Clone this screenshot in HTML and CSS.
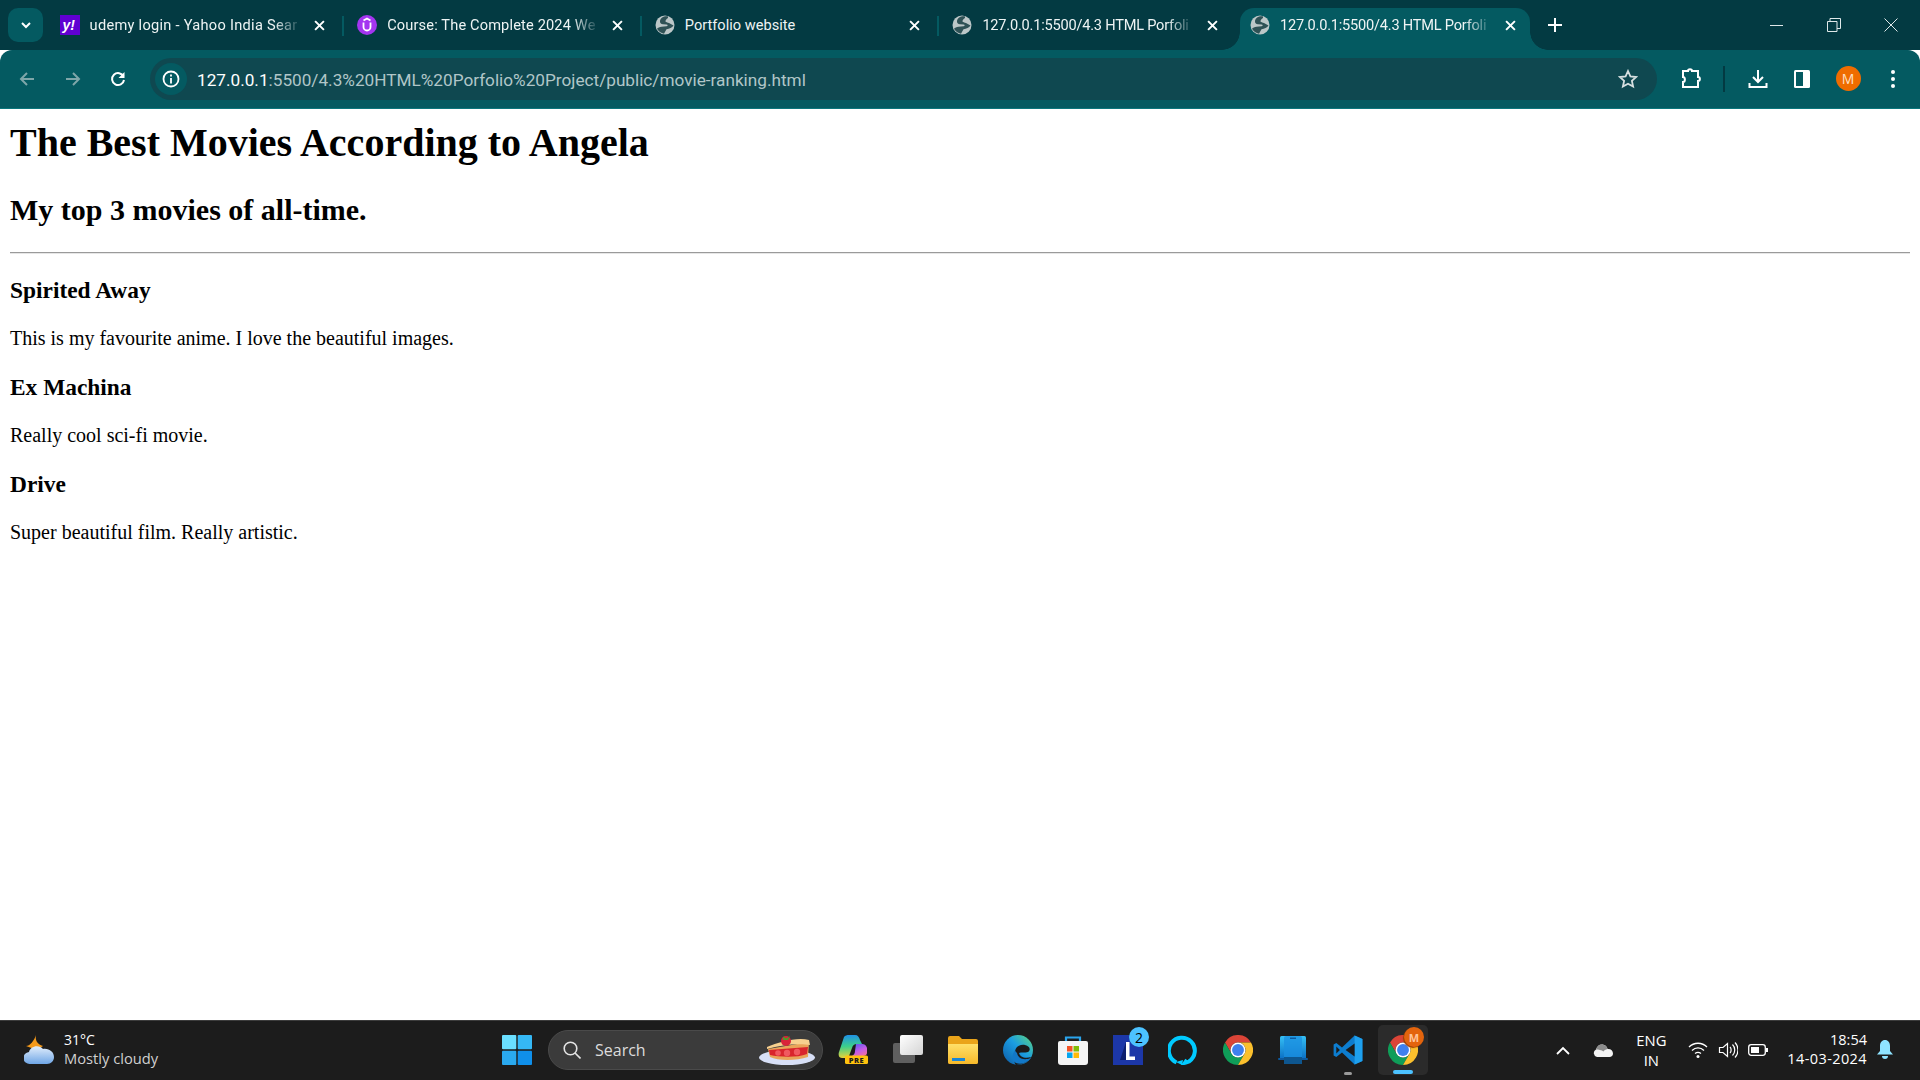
FILE: index.html
```html
<!DOCTYPE html>
<html lang="en">
<head>
<meta charset="utf-8">
<title>Movie ranking</title>
<link rel="stylesheet" href="styles.css">
</head>
<body>
<svg class="defs" width="0" height="0" aria-hidden="true">
  <defs>
    <symbol id="globe" viewBox="0 0 20 20">
      <circle cx="10" cy="10" r="9.500" fill="#bcc7c8"/>
      <path d="M13 1.500C9 .8 5.500 3 5 6c-.3 2 1 3 3 3.200l3.500.3c1.500.2 1.500 1.500 0 1.800l-5 .5c-2 .3-3.500 1-4.500 2 1.500 2.500 4 4.500 7 5l2.500-4.500c3-.5 5.500-1.500 7-3.800l-4.500-2.500c-1.500-.6-3-.6-3.500-1.500-.3-1 1-2.500 2.500-3.500z" fill="#2f5256"/>
    </symbol>
    <symbol id="chrome" viewBox="0 0 48 48">
      <path d="M24 12H44.800A24 24 0 0 0 3.200 12L13.600 30A12 12 0 0 1 24 12Z" fill="#db4437"/>
      <path d="M13.600 30L3.200 12A24 24 0 0 0 24 48L34.400 30A12 12 0 0 1 13.600 30Z" fill="#0f9d58"/>
      <path d="M24 48A24 24 0 0 0 44.800 12H24A12 12 0 0 1 34.400 30Z" fill="#fbc02d"/>
      <circle cx="24" cy="24" r="12" fill="#fff"/>
      <circle cx="24" cy="24" r="9.500" fill="#3f80ee"/>
    </symbol>
    <linearGradient id="edgeG" x1="0" y1="1" x2="1" y2="0">
      <stop offset="0" stop-color="#0c59a4"/><stop offset=".55" stop-color="#1b9de2"/><stop offset="1" stop-color="#5fd97a"/>
    </linearGradient>
    <linearGradient id="copG" x1=".25" y1="0" x2=".3" y2="1">
      <stop offset="0" stop-color="#1f8fe8"/><stop offset=".5" stop-color="#3ccf8a"/><stop offset="1" stop-color="#e8d23a"/>
    </linearGradient>
    <linearGradient id="copH" x1=".2" y1="0" x2=".8" y2="1">
      <stop offset="0" stop-color="#5a5cf0"/><stop offset=".55" stop-color="#c45ce6"/><stop offset="1" stop-color="#f26fa0"/>
    </linearGradient>
    <linearGradient id="cloudG" x1="0" y1="0" x2="0" y2="1">
      <stop offset="0" stop-color="#e2eefc"/><stop offset="1" stop-color="#6fa6e6"/>
    </linearGradient>
    <linearGradient id="folderG" x1="0" y1="0" x2="0" y2="1">
      <stop offset="0" stop-color="#ffe06a"/><stop offset="1" stop-color="#f7b92a"/>
    </linearGradient>
    <linearGradient id="linkG" x1="0" y1="0" x2="0" y2="1">
      <stop offset="0" stop-color="#36c0f5"/><stop offset="1" stop-color="#0a6fc4"/>
    </linearGradient>
    <linearGradient id="frontG" x1="0" y1="0" x2="1" y2="1">
      <stop offset="0" stop-color="#ffffff"/><stop offset="1" stop-color="#d4d4d4"/>
    </linearGradient>
  </defs>
</svg>

<header class="browser">
  <div class="tabstrip">
    <button class="expand" type="button" aria-label="Search tabs">
      <svg class="i12" viewBox="0 0 12 12"><path d="M2 4l4 4 4-4" fill="none" stroke="#fff" stroke-width="2"/></svg>
    </button>
    <div class="tabs">
      <div class="tab">
        <svg class="favicon" viewBox="0 0 20 20"><rect width="20" height="20" fill="#6001d2"/><text class="yahoo" x="2.500" y="14.500">y!</text></svg>
        <span class="tab-title wide">udemy login - Yahoo India Sear</span>
        <svg class="close" viewBox="0 0 10 10"><path d="M1 1l8 8M9 1l-8 8"/></svg>
      </div>
      <div class="tab sep">
        <svg class="favicon" viewBox="0 0 20 20"><circle cx="10" cy="10" r="10" fill="#a435f0"/><path d="M6.500 7.500V12a3.500 3.500 0 0 0 7 0V7.500M6.500 5.500L10 3.500l3.500 2" fill="none" stroke="#fff" stroke-width="1.800"/></svg>
        <span class="tab-title mid">Course: The Complete 2024 We</span>
        <svg class="close" viewBox="0 0 10 10"><path d="M1 1l8 8M9 1l-8 8"/></svg>
      </div>
      <div class="tab sep">
        <svg class="favicon"><use href="#globe"/></svg>
        <span class="tab-title plain">Portfolio website</span>
        <svg class="close" viewBox="0 0 10 10"><path d="M1 1l8 8M9 1l-8 8"/></svg>
      </div>
      <div class="tab sep">
        <svg class="favicon"><use href="#globe"/></svg>
        <span class="tab-title tight">127.0.0.1:5500/4.3 HTML Porfoli</span>
        <svg class="close" viewBox="0 0 10 10"><path d="M1 1l8 8M9 1l-8 8"/></svg>
      </div>
      <div class="tab active">
        <svg class="favicon"><use href="#globe"/></svg>
        <span class="tab-title tight">127.0.0.1:5500/4.3 HTML Porfoli</span>
        <svg class="close" viewBox="0 0 10 10"><path d="M1 1l8 8M9 1l-8 8"/></svg>
      </div>
    </div>
    <svg class="newtab" viewBox="0 0 14 14"><path d="M7 0v14M0 7h14" stroke="#fff" stroke-width="2"/></svg>
    <div class="winctl">
      <svg class="i14" viewBox="0 0 14 14"><path d="M0 7.500h13" stroke="#dfe8e9"/></svg>
      <svg class="i14" viewBox="0 0 14 14"><path d="M.5 3.500h9.500v10H.5zM3 3.500V.5h10.500v10h-3.500" fill="none" stroke="#dfe8e9"/></svg>
      <svg class="i14" viewBox="0 0 14 14"><path d="M.5.5l13 13M13.500.5l-13 13" stroke="#dfe8e9"/></svg>
    </div>
  </div>
  <div class="toolbar">
    <div class="navs">
      <svg class="i16" viewBox="0 0 16 16"><path d="M15 8H2M8 2L2 8l6 6" fill="none" stroke="#7fa6a9" stroke-width="2"/></svg>
      <svg class="i16" viewBox="0 0 16 16"><path d="M1 8h13M8 2l6 6-6 6" fill="none" stroke="#7fa6a9" stroke-width="2"/></svg>
      <svg class="i16" viewBox="0 0 16 16"><path d="M13.500 5.500A6 6 0 1 0 14 9" fill="none" stroke="#fff" stroke-width="2"/><path d="M14.500 1v6h-6z" fill="#fff"/></svg>
    </div>
    <div class="omnibox">
      <span class="site-info"><svg class="i18" viewBox="0 0 18 18"><circle cx="9" cy="9" r="7.500" fill="none" stroke="#fff" stroke-width="1.800"/><path d="M9 8v5.500M9 4.500v2" stroke="#fff" stroke-width="1.800"/></svg></span>
      <span class="url"><span class="host">127.0.0.1</span>:5500/4.3%20HTML%20Porfolio%20Project/public/movie-ranking.html</span>
      <svg class="star" viewBox="0 0 20 20"><path d="M10 2l2.400 5.300 5.800.7-4.300 3.900 1.200 5.700L10 14.700l-5.100 2.900 1.200-5.700L1.800 8l5.800-.7z" fill="none" stroke="#d6dfe0" stroke-width="1.800"/></svg>
    </div>
    <div class="actions">
      <svg class="i22" viewBox="0 0 22 22"><path d="M3 3h5c0-2.500 4-2.500 4 0h6v6c2.500 0 2.500 4 0 4v6H3v-5c2.500 0 2.500-5 0-5z" fill="none" stroke="#fff" stroke-width="2"/></svg>
      <span class="act-div"></span>
      <svg class="i22" viewBox="0 0 22 22"><path d="M11 2v11M6 9l5 5 5-5" fill="none" stroke="#fff" stroke-width="2"/><path d="M2.500 15v4h17v-4" fill="none" stroke="#fff" stroke-width="2"/></svg>
      <svg class="i22 panel" viewBox="0 0 22 22"><rect x="3" y="2" width="16" height="18" rx="1.500" fill="#fff"/><rect x="5" y="4" width="7" height="14" fill="#045a61"/></svg>
      <span class="avatar">M</span>
      <svg class="i22" viewBox="0 0 22 22"><circle cx="11" cy="4" r="2" fill="#fff"/><circle cx="11" cy="11" r="2" fill="#fff"/><circle cx="11" cy="18" r="2" fill="#fff"/></svg>
    </div>
  </div>
</header>

<main class="page">
  <h1>The Best Movies According to Angela</h1>
  <h2>My top 3 movies of all-time.</h2>
  <hr>
  <h3>Spirited Away</h3>
  <p>This is my favourite anime. I love the beautiful images.</p>
  <h3>Ex Machina</h3>
  <p>Really cool sci-fi movie.</p>
  <h3>Drive</h3>
  <p>Super beautiful film. Really artistic.</p>
</main>

<footer class="taskbar">
  <div class="weather">
    <svg class="weather-icon" viewBox="0 0 32 30">
      <path d="M12 0c-1 5 1 9 7 11l-6 4-11-4c4 0 8-5 10-11z" fill="#f59a1b"/>
      <path d="M6 29a6 6 0 0 1-1-12c1-6 10-8 14-3 6-1 11 3 11 8 0 4-3 7-7 7z" fill="url(#cloudG)"/>
    </svg>
    <div class="weather-text"><span class="temp">31°C</span><span class="cond">Mostly cloudy</span></div>
  </div>
  <div class="apps">
    <svg class="app" viewBox="0 0 30 30">
      <rect width="14.300" height="14.300" rx="1" fill="#6adfff"/><rect x="15.700" width="14.300" height="14.300" rx="1" fill="#35b8f5"/>
      <rect y="15.700" width="14.300" height="14.300" rx="1" fill="#2aa9ef"/><rect x="15.700" y="15.700" width="14.300" height="14.300" rx="1" fill="#0f8fea"/>
    </svg>
    <div class="search">
      <svg class="search-icon" viewBox="0 0 18 18"><circle cx="7.500" cy="7.500" r="6.300" fill="none" stroke="#e4e4e4" stroke-width="1.600"/><path d="M12 12l5.500 5.500" stroke="#e4e4e4" stroke-width="1.600"/></svg>
      <span class="search-label">Search</span>
      <svg class="pie" viewBox="0 0 57 30">
        <ellipse cx="28" cy="22.500" rx="28" ry="7.500" fill="#d8e0f7"/>
        <path d="M9 14L50 7l-1 15c-12 4-30 4-38 0z" fill="#e9a45a"/>
        <path d="M10 15l39-3-1 7C38 23 20 22 11 20z" fill="#d9252c"/>
        <circle cx="19" cy="18" r="2.800" fill="#f0595f"/><circle cx="28" cy="18" r="3.200" fill="#f0595f"/><circle cx="38" cy="17" r="3.200" fill="#f0595f"/>
        <path d="M8 12C20 7 38 2 50 5l1 5C40 8 22 10 8 14z" fill="#f7d08f"/>
        <circle cx="27" cy="6" r="5" fill="#d9233a"/><path d="M24 1.500l3 2 4-2.500-2 4h-5z" fill="#4c9a2a"/>
      </svg>
    </div>
    <svg class="app" viewBox="0 0 30 30">
      <path d="M6 2C7 .5 9 0 11 0h6c3 0 4 2 5 5l2 4h-5c-3 0-4 1-5 4l-3 8c-1 2-3 2-5 2H4c-3 0-4-3-3-6z" fill="url(#copG)"/>
      <path d="M18 9h5c2 0 5 0 6 4v5c0 2-2 3-4 3H14c2-1 3-3 3-5z" fill="url(#copH)"/>
      <rect x="7" y="20.500" width="23" height="8.500" rx="1.500" fill="#ffc20e"/>
      <text class="pre" x="18.500" y="27.500">PRE</text>
    </svg>
    <svg class="app" viewBox="0 0 30 30">
      <rect x="0" y="8" width="22" height="20" rx="2" fill="#5f5f5f"/>
      <rect x="7" y="0" width="23" height="20" rx="2" fill="url(#frontG)"/>
    </svg>
    <svg class="app" viewBox="0 0 30 30">
      <path d="M0 3a2 2 0 0 1 2-2h9l3 3h14a2 2 0 0 1 2 2v21a2 2 0 0 1-2 2H2a2 2 0 0 1-2-2z" fill="#eaa41a"/>
      <path d="M0 9h30v18a2 2 0 0 1-2 2H2a2 2 0 0 1-2-2z" fill="url(#folderG)"/>
      <rect x="4" y="23" width="13" height="3" fill="#1b86d6"/>
    </svg>
    <svg class="app" viewBox="0 0 30 30">
      <circle cx="15" cy="15" r="15" fill="url(#edgeG)"/>
      <path d="M12 17c0-5 5-8 10-7 5 1 6 5 3 7-3 1-7 0-9 1 1 4 6 6 12 4-3 5-9 8-15 8-3-3-1-8-1-13z" fill="#1b1b1b"/>
      <path d="M14 18c1 5 6 8 14 5-4 5-10 7-15 5-4-2-5-7-1-13 0 1 1 2 2 3z" fill="#1278c8"/>
    </svg>
    <svg class="app" viewBox="0 0 30 30">
      <path d="M8 7V2.500h14V7" fill="none" stroke="#2aa4ec" stroke-width="2.200"/>
      <path d="M0 8a2 2 0 0 1 2-2h26a2 2 0 0 1 2 2v19a3 3 0 0 1-3 3H3a3 3 0 0 1-3-3z" fill="#f4f4f4"/>
      <rect x="9" y="11" width="5.500" height="5.500" fill="#f35325"/><rect x="15.500" y="11" width="5.500" height="5.500" fill="#81bc06"/>
      <rect x="9" y="17.500" width="5.500" height="5.500" fill="#05a6f0"/><rect x="15.500" y="17.500" width="5.500" height="5.500" fill="#ffba08"/>
    </svg>
    <div class="app-wrap">
      <svg class="app" viewBox="0 0 30 30">
        <rect width="30" height="30" fill="#1c37a8"/>
        <path d="M7 25L13 7v15h9v3z" fill="#0d1f6e"/>
        <path d="M13 7h3.500v14.500H22V25H13z" fill="#fff"/>
      </svg>
      <span class="badge blue">2</span>
    </div>
    <svg class="app" viewBox="0 0 30 30">
      <path d="M8.500 27.500A13 13 0 1 1 21 26.500c-1 .5-2.500 1-4 1.300L19 25" fill="none" stroke="#00caff" stroke-width="4"/>
      <path d="M8 27l7-2-1 5z" fill="#00caff"/>
    </svg>
    <svg class="app"><use href="#chrome"/></svg>
    <svg class="app" viewBox="0 0 30 30">
      <rect x="2" y="1" width="26" height="23" rx="1.500" fill="url(#linkG)"/>
      <rect x="0" y="23" width="30" height="2" rx="1" fill="#0c5aa0"/>
      <rect x="6" y="1" width="18" height="28" rx="2" fill="#1b8fe0" opacity=".75"/>
      <rect x="6" y="22" width="18" height="7" fill="#0e568f"/>
      <rect x="12" y="2.500" width="6" height="1.500" fill="#0c5aa0"/>
    </svg>
    <div class="app-wrap">
      <svg class="app" viewBox="0 0 100 100">
        <path d="M72 2L30 42 11 27 2 32v36l9 5 19-15 42 40 26-11V13z" fill="#0d7dcf"/>
        <path d="M72 2l26 11v74L72 98z" fill="#1ea0ee"/>
        <path d="M72 28L42 50l30 22zM11 38v24l12-12z" fill="#1b1b1b"/>
      </svg>
      <span class="run-dot"></span>
    </div>
    <div class="app-active">
      <div class="app-wrap">
        <svg class="app"><use href="#chrome"/></svg>
        <span class="badge orange">M</span>
      </div>
      <span class="run-bar"></span>
    </div>
  </div>
  <div class="tray">
    <svg class="chevron" viewBox="0 0 14 9"><path d="M1 8l6-6 6 6" fill="none" stroke="#fff" stroke-width="1.800"/></svg>
    <svg class="onedrive" viewBox="0 0 20 13"><path d="M4 13a4 4 0 0 1-1-7.500C4 1.500 8-.5 11 1c2 .6 3 2 3.500 4 3-.5 5.500 1.500 5.500 4.500 0 2-1.500 3.500-3.500 3.500z" fill="#f3f3f3"/><path d="M3 5.500C4 1.500 8-.5 11 1c2 .6 3 2 3.500 4-2 .5-3.500 1.500-4 2.500-2-1.500-5-2-7.500-2z" fill="#8c8c8c"/></svg>
    <div class="lang"><span>ENG</span><span>IN</span></div>
    <div class="status">
      <svg class="i20" viewBox="0 0 20 20"><path d="M1 7c5-5 13-5 18 0M4 10.500c3.500-3.500 8.500-3.500 12 0M7 13.500c2-1.500 4-1.500 6 0" fill="none" stroke="#fff" stroke-width="1.300"/><circle cx="10" cy="16.500" r="1.500" fill="#fff"/></svg>
      <svg class="i20" viewBox="0 0 20 20"><path d="M1.500 7.500h3.500l4.500-4v13l-4.500-4H1.500zM12 7c1.500 1.500 1.500 4.500 0 6M14.500 4.500c3 3 3 8 0 11M17 2.500c4 4 4 11 0 15" fill="none" stroke="#fff" stroke-width="1.200"/></svg>
      <svg class="i20" viewBox="0 0 20 20"><rect x=".7" y="4.700" width="16.600" height="10.600" rx="2.500" fill="none" stroke="#fff" stroke-width="1.300"/><rect x="3" y="7" width="8" height="6" fill="#fff"/><rect x="18" y="8" width="2" height="4" fill="#fff"/></svg>
    </div>
    <div class="clock"><span>18:54</span><span class="date">14-03-2024</span></div>
    <svg class="bell" viewBox="0 0 16 20"><path d="M8 0c3 0 5 2.500 5 6v5l3 3.500H0L3 11V6c0-3.500 2-6 5-6z" fill="#8fe3ff"/><path d="M5 16h6c0 2-1 3-3 3s-3-1-3-3z" fill="#8fe3ff"/></svg>
  </div>
</footer>
</body>
</html>
```

FILE: styles.css
```css
* { box-sizing: border-box; }
html, body { height: 100%; }
body {
  margin: 0;
  display: flex;
  flex-direction: column;
  height: 100vh;
  overflow: hidden;
  background: #fff;
  color: #000;
}
.defs { position: absolute; }
svg { display: block; flex: none; }
.i12 { width: 12px; height: 12px; }
.i14 { width: 14px; height: 14px; }
.i16 { width: 16px; height: 16px; }
.i18 { width: 18px; height: 18px; }
.i20 { width: 20px; height: 20px; }
.i22 { width: 22px; height: 22px; }

/* browser chrome */
.browser { flex: none; font-family: "Roboto", "Liberation Sans", sans-serif; }
.tabstrip {
  height: 50px;
  background: #033a42;
  display: flex;
  align-items: flex-start;
  padding: 8px 0 0 8px;
}
.expand {
  width: 35px;
  height: 34px;
  border: 0;
  padding: 0;
  border-radius: 10px;
  background: #045a61;
  display: flex;
  align-items: center;
  justify-content: center;
}
.tabs { display: flex; margin-left: 3.600px; height: 42px; }
.tab {
  width: 297.600px;
  height: 42px;
  padding: 0 19px 8px 13px;
  display: flex;
  align-items: center;
  position: relative;
}
.sep::before {
  content: "";
  position: absolute;
  left: -2px;
  top: 8px;
  width: 2px;
  height: 20px;
  background: #045a61;
}
.favicon { width: 20px; height: 20px; }
.yahoo { font: italic bold 14px "Liberation Sans", sans-serif; fill: #fff; }
.tab-title {
  flex: 1;
  min-width: 0;
  margin-left: 10px;
  margin-right: 12px;
  font-size: 14.600px;
  line-height: 20px;
  color: #eef4f4;
  white-space: nowrap;
  overflow: hidden;
  -webkit-mask-image: linear-gradient(90deg, #000 calc(100% - 28px), transparent 100%);
  mask-image: linear-gradient(90deg, #000 calc(100% - 28px), transparent 100%);
}
.tab-title.plain {
  -webkit-mask-image: none;
  mask-image: none;
}
.wide { letter-spacing: .28px; }
.mid { letter-spacing: .15px; }
.tight { letter-spacing: -.22px; }
.close { width: 11px; height: 11px; }
.close path { stroke: #fff; stroke-width: 1.800; fill: none; }
.tab.active {
  width: 290px;
  margin-left: 3px;
  padding: 0 14px 8px 10px;
  background: #045a61;
  border-radius: 14px 14px 0 0;
}
.tab.active::before, .tab.active::after {
  content: "";
  position: absolute;
  bottom: 0;
  width: 18px;
  height: 18px;
}
.tab.active::before {
  left: -18px;
  background: radial-gradient(circle at 0 0, #033a42 17.500px, #045a61 18px);
}
.tab.active::after {
  right: -18px;
  background: radial-gradient(circle at 100% 0, #033a42 17.500px, #045a61 18px);
}
.newtab { width: 14px; height: 14px; margin: 10px 0 0 18px; }
.winctl {
  margin-left: auto;
  display: flex;
  gap: 43px;
  padding: 10px 22px 0 0;
}
.toolbar {
  height: 59px;
  background: #045a61;
  border-bottom: 1px solid #0a767c;
  border-radius: 12px 12px 0 0;
  display: flex;
  align-items: center;
  padding: 0 0 1px 19px;
}
.navs { display: flex; gap: 29.500px; width: 131px; }
.omnibox {
  width: 1507px;
  height: 42px;
  background: #0f4850;
  border-radius: 21px;
  display: flex;
  align-items: center;
  padding: 0 19px 0 5px;
}
.site-info {
  width: 32px;
  height: 32px;
  border-radius: 50%;
  background: #045a61;
  display: flex;
  align-items: center;
  justify-content: center;
}
.url {
  flex: 1;
  margin-left: 10px;
  padding-top: 2px;
  font-size: 17.200px;
  color: #b1c6c8;
  white-space: nowrap;
}
.host { color: #fff; }
.star { width: 20px; height: 20px; }
.actions {
  display: flex;
  align-items: center;
  margin-left: 23px;
}
.act-div { width: 1.500px; height: 26px; background: #033a42; margin: 0 22px 0 21px; }
.panel { margin-left: 22px; }
.avatar {
  width: 25px;
  height: 25px;
  border-radius: 50%;
  background: #ef6c00;
  color: #ffe0c4;
  font: 14px "Open Sans", sans-serif;
  display: flex;
  align-items: center;
  justify-content: center;
  margin: 0 21px 0 23px;
}

/* page: 125% zoom of browser default styles */
.page {
  flex: 1;
  min-height: 0;
  padding: 10px;
  font-family: "Liberation Serif", serif;
  font-size: 20px;
}
h1 { font-size: 40px; margin: 0 0 26.800px; }
h2 { font-size: 30px; margin: 24.900px 0; }
h3 { font-size: 23.400px; margin: 23.400px 0; }
p { margin: 20px 0; }
hr { margin: 10px 0; border: 0; border-top: 1.500px solid #9a9a9a; border-bottom: .5px solid #e6e6e6; }

/* taskbar */
.taskbar {
  flex: none;
  height: 60px;
  background: #1c1c1c;
  border-top: 1px solid #3c3c3c;
  padding-bottom: 1px;
  display: flex;
  align-items: center;
  font-family: "Open Sans", "Noto Sans", sans-serif;
  color: #fff;
  position: relative;
}
.weather {
  width: 502px;
  display: flex;
  align-items: center;
  padding-left: 24px;
}
.weather-icon { width: 32px; height: 30px; }
.weather-text { display: flex; flex-direction: column; margin-left: 8px; padding-bottom: 2px; font-size: 14.700px; line-height: 19px; }
.temp { font-size: 14px; }
.cond { color: #d0d0d0; }
.apps { display: flex; align-items: center; }
.app { width: 30px; height: 30px; }
.apps > * { margin-right: 25px; }
.apps > :first-child { margin-right: 16px; }
.apps > .search {
  width: 275px;
  height: 40px;
  border-radius: 20px;
  background: #3b3b3b;
  border: 1px solid #4a4a4a;
  display: flex;
  align-items: center;
  padding: 0 6px 0 14px;
  margin-right: 15px;
}
.search-icon { width: 18px; height: 18px; }
.search-label { margin-left: 14px; flex: 1; font-size: 16px; color: #dcdcdc; }
.pie { width: 57px; height: 30px; }
.app-wrap { position: relative; width: 30px; height: 30px; }
.badge {
  position: absolute;
  width: 20px;
  height: 20px;
  border-radius: 50%;
  display: flex;
  align-items: center;
  justify-content: center;
  font-size: 13px;
  top: -8px;
  right: -6px;
}
.blue { background: #4cc2ff; color: #000; font-size: 14px; }
.orange { background: #e3640d; color: #ffc59a; font-size: 11px; font-weight: 700; box-shadow: -1px 1px 1px #9a3d00; }
.pre { font: 800 7.500px "Open Sans", sans-serif; fill: #1c1c1c; text-anchor: middle; letter-spacing: .5px; }
.run-dot {
  position: absolute;
  left: 11px;
  top: 37px;
  width: 8px;
  height: 3px;
  border-radius: 2px;
  background: #9a9a9a;
}
.apps > .app-active {
  width: 50px;
  height: 50px;
  margin: 0 0 0 -10px;
  border-radius: 5px;
  background: #2b2b2b;
  display: flex;
  align-items: center;
  justify-content: center;
  position: relative;
}
.run-bar {
  position: absolute;
  left: 15px;
  bottom: 1px;
  width: 20px;
  height: 4px;
  border-radius: 2px;
  background: #4cc2ff;
}
.tray { display: flex; align-items: center; margin-left: auto; padding-right: 27px; }
.chevron { width: 14px; height: 9px; }
.onedrive { width: 20px; height: 13px; margin-left: 23px; }
.lang {
  width: 40px;
  margin-left: 18px;
  padding-bottom: 1px;
  display: flex;
  flex-direction: column;
  align-items: center;
  font-size: 14.800px;
  line-height: 20px;
}
.status { display: flex; gap: 10px; margin-left: 17px; }
.clock {
  margin-left: 19px;
  padding-bottom: 2px;
  display: flex;
  flex-direction: column;
  align-items: flex-end;
  font-size: 14.500px;
  line-height: 19px;
}
.date { letter-spacing: .4px; }
.bell { width: 16px; height: 20px; margin-left: 10px; }
```
